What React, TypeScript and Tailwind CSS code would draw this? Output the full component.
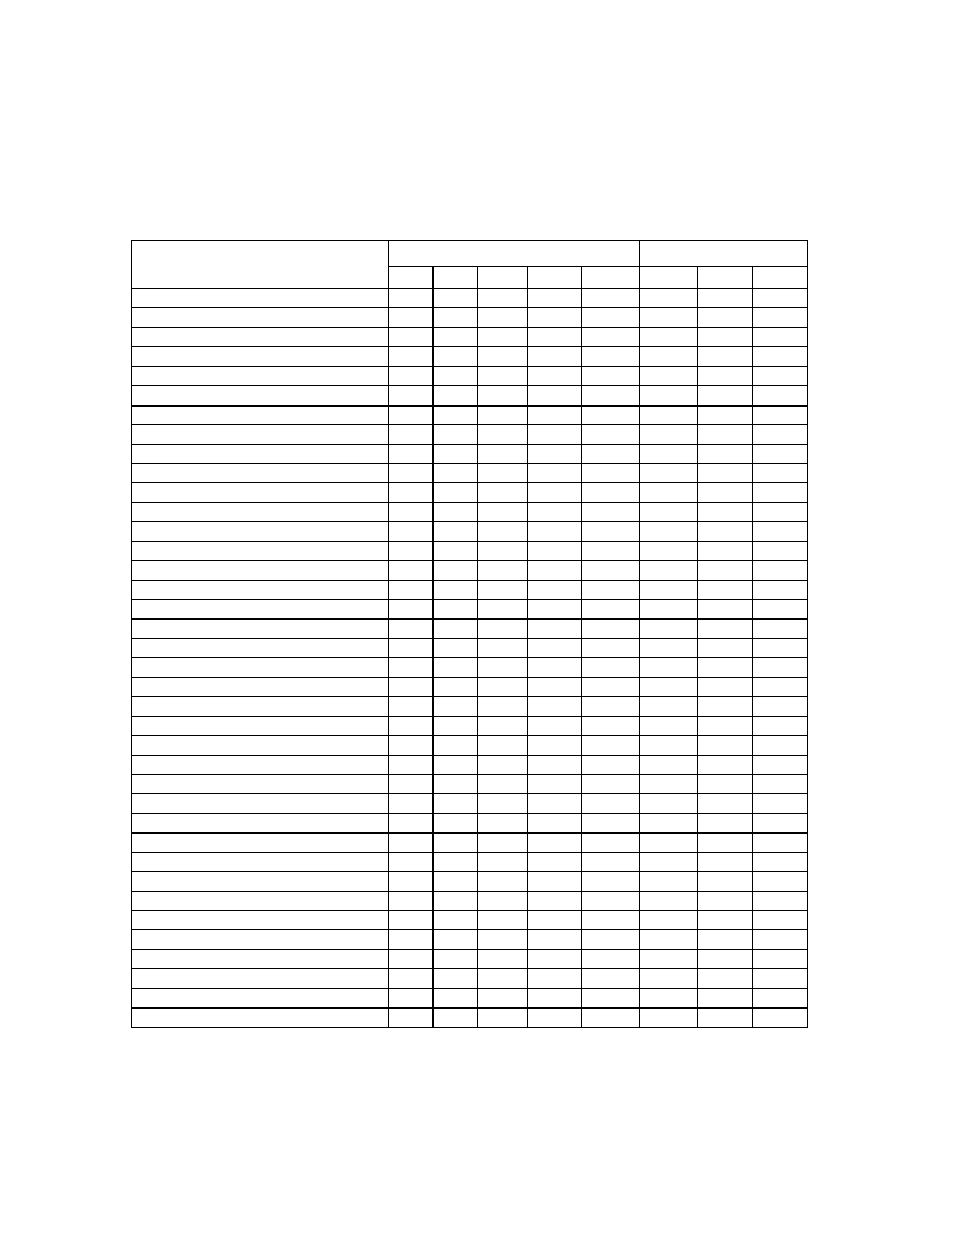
import React from "react";

const colClasses = [
  "w-[257px] border-l",
  "w-[44px] border-l",
  "w-[45px] border-l-2",
  "w-[50px] border-l",
  "w-[54px] border-l",
  "w-[58px] border-l",
  "w-[58px] border-l",
  "w-[55px] border-l",
  "w-[56px] border-l border-r",
];

const thickRows = new Set([6, 17, 28, 37]);
const ROWS = 38;

export default function App() {
  return (
    <div className="min-h-[1235px] w-[954px] bg-white font-['Liberation_Sans',Arial,sans-serif]">
      <div className="pl-[131px] pt-[240px]">
        <div className="w-[677px]">
          {/* header */}
          <div className="flex">
            <div className="h-[48px] w-[257px] shrink-0 border-l border-t border-black" />
            <div className="flex w-[420px] flex-col">
              <div className="flex h-[26px]">
                <div className="h-full w-[251px] shrink-0 border-l border-t border-black" />
                <div className="h-full w-[169px] shrink-0 border-l border-r border-t border-black" />
              </div>
              <div className="flex h-[22px]">
                {colClasses.slice(1).map((c, i) => (
                  <div key={i} className={`h-full shrink-0 border-t border-black ${c}`} />
                ))}
              </div>
            </div>
          </div>
          {/* body */}
          {Array.from({ length: ROWS }).map((_, r) => (
            <div
              key={r}
              className={`flex h-[19.45px] ${r === ROWS - 1 ? "h-[20.45px]" : ""}`}
            >
              {colClasses.map((c, i) => (
                <div
                  key={i}
                  className={`h-full shrink-0 border-black ${c} ${
                    thickRows.has(r) ? "border-t-2" : "border-t"
                  } ${r === ROWS - 1 ? "border-b" : ""}`}
                />
              ))}
            </div>
          ))}
        </div>
      </div>
    </div>
  );
}
